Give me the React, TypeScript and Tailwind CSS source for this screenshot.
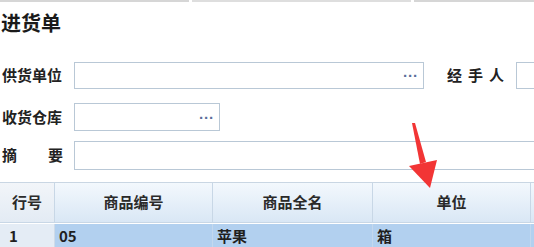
import React from 'react';

const font = { fontFamily: '"Noto Sans CJK SC", "Noto Sans", sans-serif' };

const Dots = () => (
  <span
    className="ml-auto mr-[5px] text-[15px] leading-none font-bold text-[#5b6f9a]"
    style={{ fontFamily: '"Liberation Sans", Arial, sans-serif' }}
  >
    ···
  </span>
);

const columns = [
  { title: '行号', width: 'w-[55px]' },
  { title: '商品编号', width: 'w-[158px]' },
  { title: '商品全名', width: 'w-[160px]' },
  { title: '单位', width: 'w-[158px]' },
];

const App = () => {
  return (
    <div className="relative w-[534px] h-[247px] overflow-hidden bg-white text-[#222]" style={font}>
      {/* top strip */}
      <div className="flex h-[2px] gap-[3px]">
        <div className="w-[189px] bg-[#d6d6d6]" />
        <div className="w-[219px] bg-[#dedede]" />
        <div className="flex-1 bg-[#d6d6d6]" />
      </div>

      {/* title */}
      <div className="mt-[9px] pl-[1px] h-[24px] text-[20px] leading-[24px] font-bold text-[#1a1a1a]">进货单</div>

      {/* form */}
      <div className="mt-[27px] flex flex-col">
        <div className="flex items-center h-[27px]">
          <div className="w-[74px] pl-[2px] text-[15px] font-semibold">供货单位</div>
          <div className="flex items-center w-[350px] h-full border border-[#b9c8d6] bg-white">
            <Dots />
          </div>
          <div className="ml-[23px] w-[69px] text-[15px] font-semibold tracking-[6px]">经手人</div>
          <div className="flex-1 h-full border border-[#b9c8d6] border-r-0" />
        </div>

        <div className="mt-[14px] flex items-center h-[28px]">
          <div className="w-[74px] pl-[2px] text-[15px] font-semibold">收货仓库</div>
          <div className="flex items-center w-[146px] h-full border border-[#b9c8d6] bg-white">
            <Dots />
          </div>
        </div>

        <div className="mt-[10px] flex items-center h-[29px]">
          <div className="w-[74px] pl-[2px] pr-[11px] flex justify-between text-[15px] font-semibold">
            <span>摘</span>
            <span>要</span>
          </div>
          <div className="flex-1 h-full border border-[#b9c8d6] border-r-0 bg-white" />
        </div>
      </div>

      {/* table */}
      <div className="mt-[12px] border-t border-[#c9d6e3]">
        <div className="flex h-[40px]">
          {columns.map((c, i) => (
            <div
              key={c.title}
              className={`${c.width} flex items-center justify-center border-r border-b border-[#c8d7e6] text-[15px] font-semibold text-[#2a2a2a] ${
                i === 0 ? 'bg-gradient-to-b from-[#f2f5f9] to-[#e3ebf4]' : 'bg-gradient-to-b from-[#f3f8fd] to-[#d9e7f5]'
              }`}
            >
              {c.title}
            </div>
          ))}
          <div className="flex-1 border-b border-[#c8d7e6] bg-gradient-to-b from-[#f3f8fd] to-[#d9e7f5]" />
        </div>
        <div className="flex h-[25px] mt-[1px] text-[15px] font-semibold text-[#1f1f1f]">
          <div className="w-[55px] pl-[9px] flex items-center bg-[#e4ecf5] border-r border-[#cfdbe8]">1</div>
          <div className="w-[158px] pl-[4px] flex items-center bg-[#b2d0ef] border-r border-[#c3d8ee]">05</div>
          <div className="w-[160px] pl-[4px] flex items-center bg-[#b2d0ef] border-r border-[#c3d8ee]">苹果</div>
          <div className="w-[158px] pl-[4px] flex items-center bg-[#b2d0ef] border-r border-[#c3d8ee]">箱</div>
          <div className="flex-1 bg-[#b2d0ef]" />
        </div>
      </div>

      {/* red annotation arrow */}
      <svg className="absolute left-0 top-0 pointer-events-none" width="534" height="247" viewBox="0 0 534 247">
        <polygon points="412,123 415,123 426,162 420,164" fill="#f23535" />
        <polygon points="409,166 437,160 430,188" fill="#f23535" />
      </svg>
    </div>
  );
};

export default App;
